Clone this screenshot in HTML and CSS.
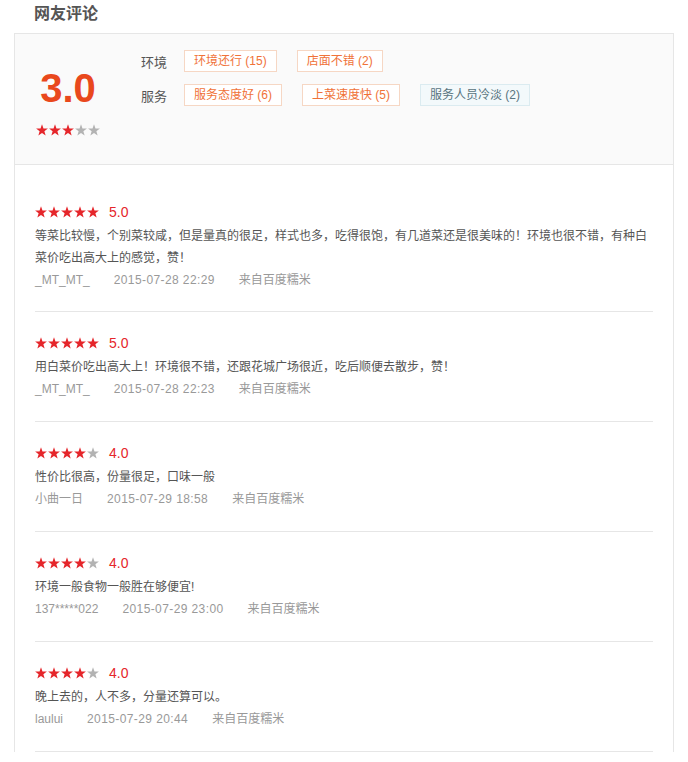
FILE: index.html
```html
<!DOCTYPE html>
<html lang="zh-CN">
<head>
<meta charset="utf-8">
<title>网友评论</title>
<link rel="stylesheet" href="styles.css">
</head>
<body>
<svg class="defs" width="0" height="0" aria-hidden="true">
  <symbol id="star" viewBox="0 0 12 12">
    <polygon points="6,0.3 7.47,4.48 11.9,4.58 8.38,7.27 9.64,11.52 6,9 2.36,11.52 3.62,7.27 0.1,4.58 4.53,4.48"/>
  </symbol>
</svg>
<h2 class="title">网友评论</h2>
<div class="box">
  <div class="summary">
    <div class="score-col">
      <div class="big-score">3.0</div>
      <div class="stars">
        <svg class="star on"><use href="#star"/></svg><svg class="star on"><use href="#star"/></svg><svg class="star on"><use href="#star"/></svg><svg class="star"><use href="#star"/></svg><svg class="star"><use href="#star"/></svg>
      </div>
    </div>
    <div class="tags-col">
      <div class="tag-row">
        <span class="label">环境</span>
        <span class="tag">环境还行 (15)</span>
        <span class="tag">店面不错 (2)</span>
      </div>
      <div class="tag-row">
        <span class="label">服务</span>
        <span class="tag">服务态度好 (6)</span>
        <span class="tag">上菜速度快 (5)</span>
        <span class="tag neg">服务人员冷淡 (2)</span>
      </div>
    </div>
  </div>
  <ul class="reviews">
    <li class="review">
      <div class="rate"><div class="stars"><svg class="star on"><use href="#star"/></svg><svg class="star on"><use href="#star"/></svg><svg class="star on"><use href="#star"/></svg><svg class="star on"><use href="#star"/></svg><svg class="star on"><use href="#star"/></svg></div><span class="num">5.0</span></div>
      <p class="text">等菜比较慢，个别菜较咸，但是量真的很足，样式也多，吃得很饱，有几道菜还是很美味的！环境也很不错，有种白菜价吃出高大上的感觉，赞！</p>
      <div class="meta"><span>_MT_MT_</span><span class="date">2015-07-28 22:29</span><span>来自百度糯米</span></div>
    </li>
    <li class="review">
      <div class="rate"><div class="stars"><svg class="star on"><use href="#star"/></svg><svg class="star on"><use href="#star"/></svg><svg class="star on"><use href="#star"/></svg><svg class="star on"><use href="#star"/></svg><svg class="star on"><use href="#star"/></svg></div><span class="num">5.0</span></div>
      <p class="text">用白菜价吃出高大上！环境很不错，还跟花城广场很近，吃后顺便去散步，赞！</p>
      <div class="meta"><span>_MT_MT_</span><span class="date">2015-07-28 22:23</span><span>来自百度糯米</span></div>
    </li>
    <li class="review">
      <div class="rate"><div class="stars"><svg class="star on"><use href="#star"/></svg><svg class="star on"><use href="#star"/></svg><svg class="star on"><use href="#star"/></svg><svg class="star on"><use href="#star"/></svg><svg class="star"><use href="#star"/></svg></div><span class="num">4.0</span></div>
      <p class="text">性价比很高，份量很足，口味一般</p>
      <div class="meta"><span>小曲一日</span><span class="date">2015-07-29 18:58</span><span>来自百度糯米</span></div>
    </li>
    <li class="review">
      <div class="rate"><div class="stars"><svg class="star on"><use href="#star"/></svg><svg class="star on"><use href="#star"/></svg><svg class="star on"><use href="#star"/></svg><svg class="star on"><use href="#star"/></svg><svg class="star"><use href="#star"/></svg></div><span class="num">4.0</span></div>
      <p class="text">环境一般食物一般胜在够便宜!</p>
      <div class="meta"><span>137*****022</span><span class="date">2015-07-29 23:00</span><span>来自百度糯米</span></div>
    </li>
    <li class="review">
      <div class="rate"><div class="stars"><svg class="star on"><use href="#star"/></svg><svg class="star on"><use href="#star"/></svg><svg class="star on"><use href="#star"/></svg><svg class="star on"><use href="#star"/></svg><svg class="star"><use href="#star"/></svg></div><span class="num">4.0</span></div>
      <p class="text">晚上去的，人不多，分量还算可以。</p>
      <div class="meta"><span>laului</span><span class="date">2015-07-29 20:44</span><span>来自百度糯米</span></div>
    </li>
  </ul>
</div>
</body>
</html>
```

FILE: styles.css
```css
* { box-sizing: border-box; }
html, body {
  margin: 0;
  padding: 0;
  background: #fff;
  font-family: "Liberation Sans", "Noto Sans CJK SC", sans-serif;
  color: #555;
}
.defs { position: absolute; width: 0; height: 0; overflow: hidden; }
.title {
  margin: 0 0 5px 0;
  padding-left: 34px;
  font-size: 16px;
  line-height: 28px;
  font-weight: bold;
  color: #555;
}
.box {
  margin-left: 14px;
  width: 660px;
  border: 1px solid #e6e6e6;
  border-bottom: none;
}
.summary {
  display: flex;
  height: 131px;
  background: #fafafa;
  border-bottom: 1px solid #e6e6e6;
}
.score-col {
  width: 106px;
  display: flex;
  flex-direction: column;
  align-items: center;
  padding-top: 32px;
}
.big-score {
  font-size: 40px;
  line-height: 44px;
  font-weight: bold;
  color: #e9481c;
}
.score-col .stars { margin-top: 14px; }
.stars {
  display: flex;
  gap: 1px;
  height: 12px;
}
.star {
  width: 12px;
  height: 12px;
  fill: #b3b3b3;
  display: block;
}
.star.on { fill: #e5262b; }
.tags-col {
  padding-left: 20px;
  padding-top: 16px;
  display: flex;
  flex-direction: column;
  gap: 12px;
}
.tag-row {
  display: flex;
  align-items: center;
  height: 22px;
}
.label {
  font-size: 13px;
  color: #555;
  width: 43px;
}
.tag {
  height: 22px;
  line-height: 20px;
  padding: 0 9px;
  margin-right: 20px;
  font-size: 12px;
  color: #f07238;
  border: 1px solid #f6d7c4;
  background: #fff;
}
.tag.neg {
  color: #587480;
  border-color: #dbebf0;
  background: #f3f9fb;
}
.reviews {
  list-style: none;
  margin: 0;
  padding: 16px 0 0 0;
}
.review {
  margin: 0 20px;
  padding: 18px 0 21px 0;
  border-bottom: 1px solid #e6e6e6;
}
.review:first-child { padding-bottom: 20px; }
.rate {
  display: flex;
  align-items: center;
  height: 26px;
}
.num {
  margin-left: 10px;
  font-size: 14px;
  color: #e5262b;
}
.text {
  margin: 0;
  font-size: 12px;
  line-height: 22px;
  color: #555;
}
.meta {
  display: flex;
  gap: 24px;
  font-size: 12px;
  line-height: 22px;
  color: #999;
}
.meta .date { letter-spacing: 0.4px; }
```
